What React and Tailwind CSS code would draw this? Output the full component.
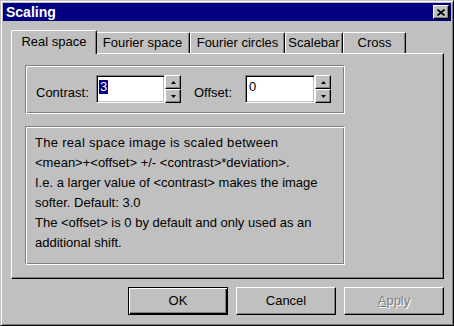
import React from 'react';

// Win9x style "Scaling" property sheet.

const FONT = "font-['Liberation_Sans',Arial,sans-serif]";

const TABS = [
  { key: 'fourier', label: 'Fourier space', w: 'w-[95px] -ml-[2px]' },
  { key: 'circles', label: 'Fourier circles', w: 'w-[95px]' },
  { key: 'scalebar', label: 'Scalebar', w: 'w-[58px]' },
  { key: 'cross', label: 'Cross', w: 'w-[63px]' },
];

function Arrow({ up }) {
  return (
    <svg width="5" height="3" viewBox="0 0 5 3" className="block">
      <polygon points={up ? '0,3 2.5,0 5,3' : '0,0 5,0 2.5,3'} fill="#000" />
    </svg>
  );
}

function SpinField({ value, selected, width }) {
  return (
    <div className="flex">
      <div
        className={`${width} h-[28px] bg-white border border-t-[#808080] border-l-[#808080] border-r-white border-b-white shadow-[inset_1px_1px_0_#000,inset_-1px_-1px_0_#c0c0c0] pl-[2px] pt-[1px]`}
      >
        <span className={`inline-block px-[1px] leading-[14px] text-[13px] ${selected ? 'bg-[#000080] text-white' : 'text-black'}`}>
          {value}
        </span>
      </div>
      <div className="flex flex-col w-[16px]">
        <div className="h-[14px] flex items-center justify-center bg-[#c0c0c0] border border-t-white border-l-white border-r-black border-b-black shadow-[inset_-1px_-1px_0_#808080]">
          <Arrow up />
        </div>
        <div className="h-[14px] flex items-center justify-center bg-[#c0c0c0] border border-t-white border-l-white border-r-black border-b-black shadow-[inset_-1px_-1px_0_#808080]">
          <Arrow />
        </div>
      </div>
    </div>
  );
}

function Button({ children, isDefault, disabled }) {
  const frame = isDefault
    ? 'border border-black shadow-[inset_1px_1px_0_#fff,inset_-1px_-1px_0_#000,inset_-2px_-2px_0_#808080]'
    : 'border border-t-white border-l-white border-r-black border-b-black shadow-[inset_-1px_-1px_0_#808080]';
  return (
    <div className={`w-[100px] h-[28px] flex items-center justify-center bg-[#c0c0c0] text-[13px] ${frame}`}>
      {disabled ? (
        <span className="text-[#808080] [text-shadow:1px_1px_0_#fff]">{children}</span>
      ) : (
        <span className="text-black">{children}</span>
      )}
    </div>
  );
}

export default function App() {
  return (
    <div className={`${FONT} w-[454px] h-[326px] bg-[#c0c0c0] border border-t-[#c0c0c0] border-l-[#c0c0c0] border-r-black border-b-black shadow-[inset_1px_1px_0_#fff,inset_-1px_-1px_0_#808080] p-[2px] flex flex-col`}>
      {/* title bar */}
      <div className="h-[18px] bg-[#000080] flex items-center justify-between pl-[3px] pr-[2px]">
        <span className="text-white font-bold text-[14px] leading-[18px]">Scaling</span>
        <div className="w-[16px] h-[14px] flex items-center justify-center bg-[#c0c0c0] border border-t-white border-l-white border-r-black border-b-black shadow-[inset_-1px_-1px_0_#808080]">
          <svg width="8" height="7" viewBox="0 0 8 7" className="block">
            <path d="M0.5 0.5 L7.5 6.5 M7.5 0.5 L0.5 6.5" stroke="#000" strokeWidth="1.7" />
          </svg>
        </div>
      </div>

      {/* tabs */}
      <div className="mt-[9px] pl-[8px] flex items-end h-[23px]">
        <div className="relative z-10 w-[86px] h-[24px] -mb-[1px] bg-[#c0c0c0] border-l border-t border-r border-l-white border-t-white border-r-black rounded-t-[2px] shadow-[inset_-1px_0_0_#808080] flex items-center justify-center text-[13px] text-black pb-[2px]">
          Real space
        </div>
        {TABS.map((t) => (
          <div
            key={t.key}
            className={`${t.w} h-[21px] bg-[#c0c0c0] border-l border-t border-r border-l-white border-t-white border-r-black rounded-t-[2px] shadow-[inset_-1px_0_0_#808080] flex items-center justify-center text-[13px] text-black`}
          >
            {t.label}
          </div>
        ))}
      </div>

      {/* tab page */}
      <div className="ml-[8px] w-[433px] h-[226px] border border-t-white border-l-white border-r-black border-b-black shadow-[inset_-1px_-1px_0_#808080] pl-[13px] pt-[11px] text-[13px] text-black">
        <div className="w-[320px] h-[49px] border border-t-[#808080] border-l-[#808080] border-r-white border-b-white shadow-[inset_1px_1px_0_#fff,inset_-1px_-1px_0_#808080] flex items-start pt-[9px] pl-[10px]">
          <span className="w-[60px] mt-[10px] leading-[15px]">Contrast:</span>
          <SpinField value="3" selected width="w-[69px]" />
          <span className="w-[51px] ml-[13px] mt-[10px] leading-[15px]">Offset:</span>
          <SpinField value="0" width="w-[70px]" />
        </div>

        <div className="mt-[12px] w-[320px] h-[139px] border border-t-[#808080] border-l-[#808080] border-r-white border-b-white shadow-[inset_1px_1px_0_#fff,inset_-1px_-1px_0_#808080] pl-[9px] pt-[6px] leading-[20px] whitespace-nowrap">
          <span className="tracking-[0.3px]">The real space image is scaled between</span><br />
          &lt;mean&gt;+&lt;offset&gt; +/- &lt;contrast&gt;*deviation&gt;.<br />
          I.e. a larger value of &lt;contrast&gt; makes the image<br />
          softer. Default: 3.0<br />
          The &lt;offset&gt; is 0 by default and only used as an<br />
          additional shift.
        </div>
      </div>

      {/* buttons */}
      <div className="mt-[8px] pr-[7px] flex justify-end gap-[8px]">
        <Button isDefault>OK</Button>
        <Button>Cancel</Button>
        <Button disabled>
          <span className="underline">A</span>pply
        </Button>
      </div>
    </div>
  );
}
